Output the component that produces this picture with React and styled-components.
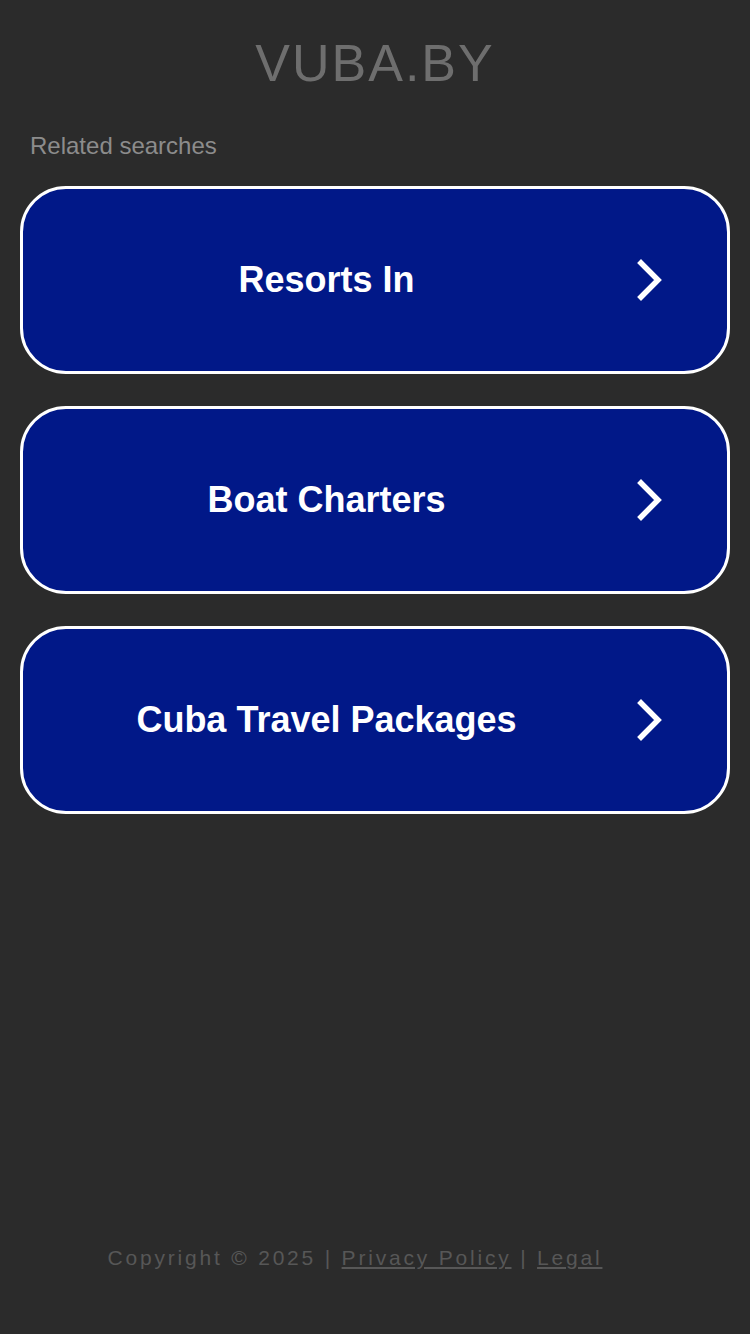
import React from "react";
import styled, { createGlobalStyle } from "styled-components";

const Global = createGlobalStyle`
  html, body { margin: 0; padding: 0; background: #2b2b2b; }
  body { font-family: Arial, "Liberation Sans", sans-serif; }
  * { box-sizing: border-box; }
`;

const Page = styled.div`
  min-height: 100vh;
  display: flex;
  flex-direction: column;
  padding: 0 20px;
`;

const Title = styled.h1`
  margin: 33px 0 0;
  text-align: center;
  font-weight: 400;
  font-size: 52px;
  line-height: 60px;
  letter-spacing: 2px;
  color: #6e6e6e;
`;

const Label = styled.div`
  margin: 39px 0 0 10px;
  font-size: 24px;
  line-height: 28px;
  color: #8c8c8c;
`;

const List = styled.div`
  margin-top: 26px;
  display: flex;
  flex-direction: column;
  gap: 32px;
`;

const Card = styled.a`
  display: flex;
  align-items: center;
  height: 188px;
  padding: 0 30px 0 27px;
  border: 3px solid #ffffff;
  border-radius: 46px;
  background: #011888;
  color: #ffffff;
  text-decoration: none;
`;

const CardText = styled.span`
  flex: 1;
  text-align: center;
  font-weight: 700;
  font-size: 36px;
`;

const ArrowBox = styled.span`
  width: 94px;
  display: flex;
  justify-content: center;
  align-items: center;
`;

const Footer = styled.footer`
  margin-top: auto;
  padding: 0 40px 62px 0;
  text-align: center;
  font-size: 21px;
  line-height: 28px;
  letter-spacing: 2.8px;
  color: #575757;
`;

const FootLink = styled.a`
  color: #575757;
  text-decoration: underline;
`;

const Chevron = () => (
  <svg width="28" height="42" viewBox="0 0 28 42">
    <polyline
      points="5,4 22,21 5,38"
      fill="none"
      stroke="#ffffff"
      strokeWidth="5.5"
      strokeLinecap="square"
    />
  </svg>
);

const items = ["Resorts In", "Boat Charters", "Cuba Travel Packages"];

export default function App() {
  return (
    <>
      <Global />
      <Page>
        <Title>VUBA.BY</Title>
        <Label>Related searches</Label>
        <List>
          {items.map((t) => (
            <Card key={t} href="#">
              <CardText>{t}</CardText>
              <ArrowBox>
                <Chevron />
              </ArrowBox>
            </Card>
          ))}
        </List>
        <Footer>
          Copyright © 2025 | <FootLink href="#">Privacy Policy</FootLink> |{" "}
          <FootLink href="#">Legal</FootLink>
        </Footer>
      </Page>
    </>
  );
}
